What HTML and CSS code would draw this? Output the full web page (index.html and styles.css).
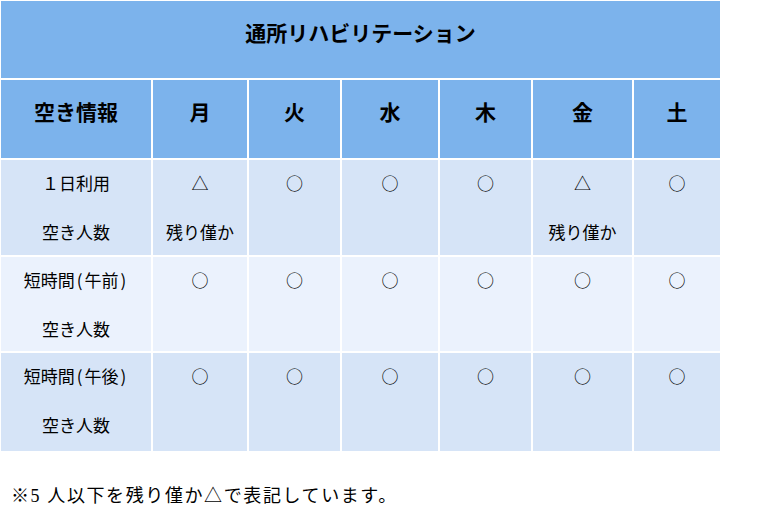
FILE: index.html
```html
<!DOCTYPE html>
<html lang="ja">
<head>
<meta charset="utf-8">
<link rel="stylesheet" href="styles.css">
</head>
<body>
<table class="avail">
  <colgroup>
    <col class="c1"><col class="c2"><col class="c3"><col class="c4"><col class="c5"><col class="c6"><col class="c7">
  </colgroup>
  <tr class="title-row"><th colspan="7" class="title">通所リハビリテーション</th></tr>
  <tr class="head-row">
    <th>空き情報</th><th>月</th><th>火</th><th>水</th><th>木</th><th>金</th><th>土</th>
  </tr>
  <tr class="row row-a r1">
    <td><p>１日利用</p><p class="second">空き人数</p></td>
    <td><p>△</p><p class="second">残り僅か</p></td>
    <td><p>○</p></td>
    <td><p>○</p></td>
    <td><p>○</p></td>
    <td><p>△</p><p class="second">残り僅か</p></td>
    <td><p>○</p></td>
  </tr>
  <tr class="row row-b r2">
    <td><p>短時間<span class="paren">(</span>午前<span class="paren">)</span></p><p class="second">空き人数</p></td>
    <td><p>○</p></td>
    <td><p>○</p></td>
    <td><p>○</p></td>
    <td><p>○</p></td>
    <td><p>○</p></td>
    <td><p>○</p></td>
  </tr>
  <tr class="row row-a r3">
    <td><p>短時間<span class="paren">(</span>午後<span class="paren">)</span></p><p class="second">空き人数</p></td>
    <td><p>○</p></td>
    <td><p>○</p></td>
    <td><p>○</p></td>
    <td><p>○</p></td>
    <td><p>○</p></td>
    <td><p>○</p></td>
  </tr>
</table>
<p class="note">※5 人以下を残り僅か△で表記しています。</p>
</body>
</html>
```

FILE: styles.css
```css
html, body {
  margin: 0;
  padding: 0;
  background: #ffffff;
}

.avail {
  border-collapse: separate;
  border-spacing: 2px;
  margin: -1px 0 0 -1px;
  table-layout: fixed;
  width: 723px;
  font-family: "Noto Sans CJK JP", "Noto Sans", sans-serif;
  color: #000;
}

.c1 { width: 150px; }
.c2 { width: 94px; }
.c3 { width: 91px; }
.c4 { width: 96px; }
.c5 { width: 91px; }
.c6 { width: 99px; }
.c7 { width: 86px; }

.avail th,
.avail td {
  padding: 0;
  text-align: center;
  vertical-align: top;
}

.title-row th,
.head-row th {
  background: #7cb3ec;
  font-size: 21px;
  font-weight: 700;
  line-height: 30px;
  padding-top: 16px;
  box-sizing: border-box;
}

.title-row th { height: 77px; }
.head-row th { height: 78px; }

.row td {
  font-size: 17px;
  font-weight: 400;
  line-height: 26px;
  padding-top: 10px;
  box-sizing: border-box;
}

.row td p {
  margin: 0;
}

.row td p.second {
  margin-top: 23px;
}

.paren {
  margin: 0 2px;
}

.row-a td { background: #d6e4f7; }
.row-b td { background: #ebf2fd; }

.r1 td { height: 95px; }
.r2 td { height: 94px; }
.r3 td { height: 98px; }

.note {
  margin: 30px 0 0 11px;
  font-family: "Liberation Serif", "Noto Sans CJK JP", serif;
  font-size: 18px;
  line-height: 26px;
  letter-spacing: 1.6px;
  color: #000;
}
```
